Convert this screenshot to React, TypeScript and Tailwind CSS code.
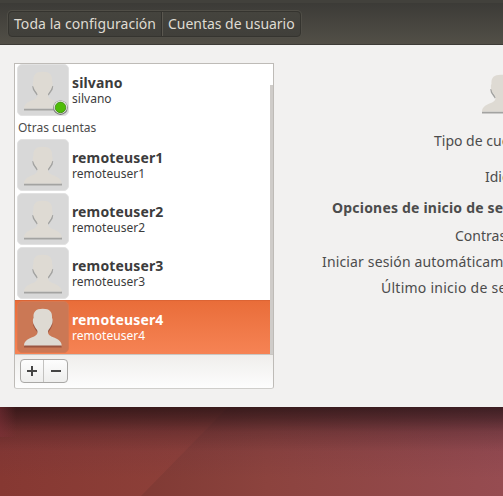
const SILHOUETTE =
  'M16.500 17C16 11 18.500 7.700 25.700 7.700C33 7.700 35.500 11 35 17C36 18 35.700 22.500 34.500 24C33.500 27 31 28.500 31 30.500C31 34 33 35 37 36.500C41.500 38.500 44.500 40.500 44.700 44.500H7C7.200 40.500 10 38.500 14.500 36.500C18.500 35 20.500 34 20.500 30.500C20.500 28.500 18 27 17 24C15.800 22.500 15.500 18 16.500 17Z';

function Silhouette({ selected = false }: { selected?: boolean }) {
  return (
    <>
      {selected ? (
        <path d={SILHOUETTE} transform="translate(0 2)" fill="#9a5540" />
      ) : (
        <>
          <path d="M16 22L16.700 25.500L20.500 31M35.500 22L34.800 25.500L31 31" fill="none" stroke="#a3a3a1" strokeWidth="1.600" />
          <path d="M7 44.500H45V46.500H7Z" fill="#a3a3a1" />
        </>
      )}
      <path d={SILHOUETTE} fill="#dedad3" />
    </>
  );
}

function Avatar({ selected = false }: { selected?: boolean }) {
  return (
    <svg className="block h-[52px] w-[52px] shrink-0" viewBox="0 0 52 52">
      <rect x=".5" y=".5" width="51" height="51" rx="4.500" fill={selected ? '#cb7855' : '#d8d8d8'} stroke={selected ? '#d87850' : '#e2e2e2'} />
      <Silhouette selected={selected} />
    </svg>
  );
}

function UserRow({ name, selected = false, online = false }: { name: string; selected?: boolean; online?: boolean }) {
  return (
    <div
      className={
        selected
          ? 'flex h-[54px] items-start border-t border-[#dc6434] bg-gradient-to-b from-[#e96d39] to-[#f68354] pl-[2px] text-white'
          : 'flex h-[54px] items-start pt-px pl-[2px] text-[#3c3c3c]'
      }
    >
      <div className="relative">
        <Avatar selected={selected} />
        {online && (
          <svg className="absolute top-[36px] left-[36px] h-4 w-4" viewBox="0 0 16 16">
            <circle cx="7.500" cy="7.700" r="7.200" fill="#777" />
            <circle cx="7.500" cy="7.200" r="6.500" fill="#f1f1ee" />
            <circle cx="7.500" cy="7.400" r="5.300" fill="#4fbc07" stroke="#378509" strokeWidth=".8" />
          </svg>
        )}
      </div>
      <div className="mt-[10px] ml-[3px] flex flex-col whitespace-nowrap">
        <span className="h-[17px] text-[14px] leading-[17px] font-bold tracking-[.14px]">{name}</span>
        <span className="h-[15px] text-[12px] leading-[15px] tracking-[.03px]">{name}</span>
      </div>
    </div>
  );
}

const SETTINGS = [
  { label: 'Tipo de cuenta', style: 'mt-[12px] pl-[120px]' },
  { label: 'Idioma', style: 'mt-[16px] pl-[171px]' },
  { label: 'Opciones de inicio de sesión', style: 'mt-[11px] pl-[18px] font-bold tracking-[.2px]' },
  { label: 'Contraseña', style: 'mt-[8px] pl-[141px]' },
  { label: 'Iniciar sesión automáticamente', style: 'mt-[6px] pl-[8px] tracking-[.15px]' },
  { label: 'Último inicio de sesión', style: 'mt-[6px] pl-[67px] tracking-[.25px]' },
];

export default function App() {
  return (
    <div className="flex h-[496px] w-[503px] flex-col overflow-hidden font-['Noto_Sans',sans-serif] text-[14px] text-[#4c4c4c]">
      <header className="flex h-[45px] shrink-0 border-t-[3px] border-b border-t-[#42413c] border-b-[#3d3b36] bg-gradient-to-b from-[#3c3b37] to-[#524f47] pt-[8px] pl-[8px]">
        <nav className="flex h-[26px] w-[293px] overflow-hidden rounded-[4px] border border-[#35342f] bg-gradient-to-b from-[#45443e] to-[#403f3a] text-[#dfdbd2] shadow-[0_0_0_1px_#504e47]">
          <span className="w-[153px] border-r border-[#33322e] pl-[5px] leading-[24px] tracking-[.06px] whitespace-nowrap">Toda la configuración</span>
          <span className="flex-1 border-l border-[#5b5850] pl-[5px] leading-[24px] tracking-[-.03px] whitespace-nowrap">Cuentas de usuario</span>
        </nav>
      </header>

      <main className="flex h-[362px] shrink-0 bg-[#f2f1f0] pl-[14px]">
        <aside className="mt-[18px] flex h-[326px] w-[260px] flex-col overflow-hidden rounded-b-[3px] border border-[#bebbb7] border-b-[#cfcecb]">
          <div className="flex h-[290px] shrink-0 bg-white">
            <div className="w-[255px]">
              <div className="-mt-px">
                <UserRow name="silvano" online />
              </div>
              <div className="h-[21px] pl-[3px] text-[12px] leading-[22px]">Otras cuentas</div>
              <UserRow name="remoteuser1" />
              <UserRow name="remoteuser2" />
              <UserRow name="remoteuser3" />
              <UserRow name="remoteuser4" selected />
            </div>
            <div className="mt-[21px] w-[3px] bg-[#cfccc9]" />
          </div>
          <div className="flex h-[34px] items-start border-t border-[#c9c7c3] bg-gradient-to-b from-[#efeeec] to-[#fdfdfd] pt-[4px] pl-[5px]">
            <div className="flex h-[24px] w-[48px] rounded-[4px] border border-[#a9a8a6] bg-gradient-to-b from-[#fdfdfd] to-[#eeeeed]">
              <button className="flex w-[23px] items-center justify-center border-r border-[#c3c2c0]">
                <svg className="h-[10px] w-[10px]" viewBox="0 0 10 10">
                  <path d="M0 5H10M5 0V10" stroke="#454545" strokeWidth="2" />
                </svg>
              </button>
              <button className="flex flex-1 items-center justify-center">
                <svg className="h-[10px] w-[10px]" viewBox="0 0 10 10">
                  <path d="M0 5H10" stroke="#454545" strokeWidth="2" />
                </svg>
              </button>
            </div>
          </div>
        </aside>

        <section className="ml-[40px] min-w-0 flex-1 overflow-hidden pt-[22px]">
          <svg className="ml-[161px] block h-[52px] w-[52px]" viewBox="0 0 52 52">
            <Silhouette />
          </svg>
          {SETTINGS.map((item) => (
            <div key={item.label} className={`${item.style} h-[20px] leading-[20px] whitespace-nowrap`}>
              {item.label}
            </div>
          ))}
        </section>
      </main>

      <footer className="relative h-[89px] shrink-0 overflow-hidden bg-gradient-to-r from-[#863832] via-[#90433c] to-[#964b50]">
        <svg className="block h-full w-full" viewBox="0 0 503 89" preserveAspectRatio="none">
          <defs>
            <linearGradient id="facet" x1="0" x2="1">
              <stop offset="0" stopColor="#803a34" />
              <stop offset=".35" stopColor="#8c433e" />
              <stop offset="1" stopColor="#964c51" />
            </linearGradient>
            <linearGradient id="plum" x1="0" y1="0" x2="0" y2="1">
              <stop offset="0" stopColor="#5c2a3e" stopOpacity=".32" />
              <stop offset=".8" stopColor="#5c2a3e" stopOpacity="0" />
            </linearGradient>
            <linearGradient id="shade" x1="0" y1="0" x2="0" y2="1">
              <stop offset="0" stopOpacity=".54" />
              <stop offset=".12" stopOpacity=".39" />
              <stop offset=".28" stopOpacity=".14" />
              <stop offset=".5" stopOpacity="0" />
            </linearGradient>
            <linearGradient id="corner" x1="0" x2="1">
              <stop offset="0" stopColor="#803139" stopOpacity=".5" />
              <stop offset="1" stopColor="#803139" stopOpacity="0" />
            </linearGradient>
          </defs>
          <path d="M228 0H503V89H141Z" fill="url(#facet)" />
          <path d="M0 0H503V89H0Z" fill="url(#plum)" />
          <path d="M0 0H503V89H0Z" fill="url(#shade)" />
          <path d="M0 0H16V30H0Z" fill="url(#corner)" />
        </svg>
      </footer>
    </div>
  );
}
